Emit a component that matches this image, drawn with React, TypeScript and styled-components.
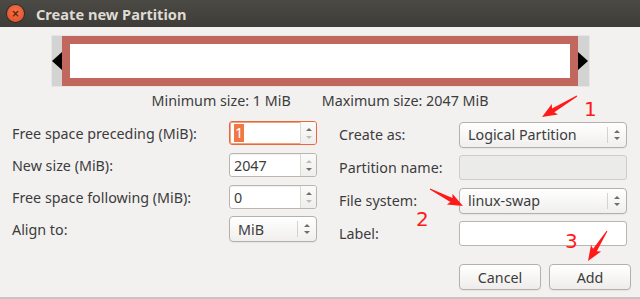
import React from 'react'
import styled, { createGlobalStyle } from 'styled-components'

const GlobalStyle = createGlobalStyle`
  html, body {
    margin: 0;
    padding: 0;
    width: 640px;
    height: 299px;
    overflow: hidden;
    background: #f2f1f0;
  }
  * {
    box-sizing: border-box;
  }
`

const Window = styled.div`
  position: relative;
  width: 640px;
  height: 299px;
  background: #f2f1f0;
  border-bottom: 2px solid #c8c5c0;
  font-family: 'Noto Sans', 'Open Sans', sans-serif;
  font-size: 14.3px;
  color: #3c3c3c;
  display: flex;
  flex-direction: column;
`

const TitleBar = styled.div`
  height: 27px;
  display: flex;
  align-items: center;
  padding-left: 7px;
  background: linear-gradient(#4b4a45, #3d3c38);
`

const CloseButton = styled.div`
  width: 17px;
  height: 17px;
  border-radius: 50%;
  background: radial-gradient(circle at 50% 40%, #f4744a, #df4b22);
  box-shadow: 0 0 0 1px #2e2d2a;
  display: flex;
  align-items: center;
  justify-content: center;
  color: #5a1d0c;
  font-family: 'DejaVu Sans', sans-serif;
  font-size: 10px;
  font-weight: bold;
  line-height: 1;
`

const Title = styled.div`
  margin-left: 12px;
  color: #dfdbd2;
  font-weight: bold;
  font-size: 14.6px;
`

const Body = styled.div`
  display: flex;
  flex-direction: column;
  padding-top: 8px;
`

const PartitionBar = styled.div`
  align-self: center;
  margin-left: 1px;
  width: 539px;
  height: 52px;
  border: 1px solid #e6e6e6;
  background: #d3d3d3;
  display: flex;
  align-items: stretch;
`

const Handle = styled.div<{ $side: 'left' | 'right' }>`
  width: ${(p) => (p.$side === 'left' ? '10px' : '11px')};
  display: flex;
  align-items: center;
`

const Triangle = styled.div<{ $side: 'left' | 'right' }>`
  width: 0;
  height: 0;
  border-top: 9px solid transparent;
  border-bottom: 9px solid transparent;
  ${(p) =>
    p.$side === 'left'
      ? 'border-right: 10px solid #000;'
      : 'border-left: 10px solid #000;'}
`

const PartitionBox = styled.div`
  flex: 1;
  border: 8px solid #c1675d;
  background: #fff;
`

const SizeInfo = styled.div`
  display: flex;
  justify-content: center;
  gap: 31px;
  margin-top: 6px;
  height: 16px;
  line-height: 16px;
`

const Form = styled.div`
  display: flex;
  margin-top: 8px;
  padding-left: 12px;
`

const LeftGrid = styled.div`
  display: grid;
  grid-template-columns: 217px 88px;
  grid-auto-rows: 32px;
  align-items: center;
`

const RightGrid = styled.div`
  display: grid;
  grid-template-columns: 120px 168px;
  grid-auto-rows: 33px;
  align-items: center;
  margin-left: 22px;
  padding-top: 1px;
`

const Label = styled.div`
  white-space: nowrap;
`

const SpinBox = styled.div<{ $focused?: boolean }>`
  height: 24px;
  display: flex;
  border: 1px solid ${(p) => (p.$focused ? '#e9683a' : '#b9b5af')};
  border-radius: 3px;
  background: #fff;
  box-shadow: ${(p) => (p.$focused ? 'inset 0 0 0 1px #f2a17f' : 'inset 0 1px 1px rgba(0,0,0,0.06)')};
  overflow: hidden;
`

const SpinValue = styled.div`
  flex: 1;
  display: flex;
  align-items: center;
  padding-left: 4px;
`

const Selected = styled.span`
  background: #f07746;
  color: #fff;
  padding: 0 1px;
  line-height: 18px;
`

const SpinButtons = styled.div`
  width: 16px;
  border-left: 1px solid #dcd9d5;
  background: linear-gradient(#fbfbfa, #efeeec);
  display: flex;
  flex-direction: column;
  align-items: center;
  justify-content: center;
  gap: 5px;
`

const Arrow = styled.div<{ $dir: 'up' | 'down'; $dim?: boolean }>`
  width: 0;
  height: 0;
  border-left: 3px solid transparent;
  border-right: 3px solid transparent;
  ${(p) =>
    p.$dir === 'up'
      ? `border-bottom: 3px solid ${p.$dim ? '#bdbdbd' : '#6e6e6e'};`
      : `border-top: 3px solid ${p.$dim ? '#bdbdbd' : '#6e6e6e'};`}
`

const Combo = styled.div`
  height: 26px;
  display: flex;
  align-items: center;
  border: 1px solid #b4b0aa;
  border-radius: 4px;
  background: linear-gradient(#ffffff, #f0efed);
  box-shadow: 0 1px 1px rgba(0, 0, 0, 0.05);
`

const ComboText = styled.div`
  flex: 1;
  padding-left: 8px;
`

const ComboArrows = styled.div`
  width: 19px;
  height: 16px;
  border-left: 1px solid #d6d3ce;
  display: flex;
  flex-direction: column;
  align-items: center;
  justify-content: center;
  gap: 4px;
`

const Entry = styled.div<{ $disabled?: boolean }>`
  height: 25px;
  border: 1px solid ${(p) => (p.$disabled ? '#cfccc7' : '#b9b5af')};
  border-radius: 3px;
  background: ${(p) => (p.$disabled ? '#ebebea' : '#fff')};
`

const ButtonRow = styled.div`
  display: flex;
  justify-content: flex-end;
  gap: 8px;
  margin-top: 14px;
  padding-right: 9px;
`

const Button = styled.div`
  width: 82px;
  height: 26px;
  display: flex;
  align-items: center;
  justify-content: center;
  border: 1px solid #b4b0aa;
  border-radius: 4px;
  background: linear-gradient(#ffffff, #eeedeb);
  box-shadow: 0 1px 1px rgba(0, 0, 0, 0.06);
`

const Overlay = styled.svg`
  position: absolute;
  left: 0;
  top: 0;
  pointer-events: none;
`

const Mark = styled.span<{ $x: number; $y: number }>`
  position: absolute;
  left: ${(p) => p.$x}px;
  top: ${(p) => p.$y}px;
  font-family: 'DejaVu Sans', sans-serif;
  font-size: 20px;
  line-height: 1;
  color: #ff1a1a;
`

// tapered arrow polygon from tail (x1,y1) to tip (x2,y2)
const arrowPoints = (x1: number, y1: number, x2: number, y2: number) => {
  const dx = x2 - x1
  const dy = y2 - y1
  const len = Math.hypot(dx, dy)
  const ux = dx / len
  const uy = dy / len
  const nx = -uy
  const ny = ux
  const at = (d: number, w: number) =>
    `${(x1 + ux * d + nx * w).toFixed(1)},${(y1 + uy * d + ny * w).toFixed(1)}`
  const headLen = 13
  return [
    at(0, 0.5),
    at(len - headLen, 2.2),
    at(len - headLen - 2, 6),
    at(len, 0),
    at(len - headLen - 2, -6),
    at(len - headLen, -2.2),
    at(0, -0.5),
  ].join(' ')
}

const Spin = ({
  value,
  focused,
  upDim,
  downDim,
}: {
  value: string
  focused?: boolean
  upDim?: boolean
  downDim?: boolean
}) => (
  <SpinBox $focused={focused}>
    <SpinValue>{focused ? <Selected>{value}</Selected> : value}</SpinValue>
    <SpinButtons>
      <Arrow $dir="up" $dim={upDim} />
      <Arrow $dir="down" $dim={downDim} />
    </SpinButtons>
  </SpinBox>
)

const ComboBox = ({ text }: { text: string }) => (
  <Combo>
    <ComboText>{text}</ComboText>
    <ComboArrows>
      <Arrow $dir="up" />
      <Arrow $dir="down" />
    </ComboArrows>
  </Combo>
)

export default function App() {
  return (
    <Window>
      <GlobalStyle />
      <TitleBar>
        <CloseButton>×</CloseButton>
        <Title>Create new Partition</Title>
      </TitleBar>
      <Body>
        <PartitionBar>
          <Handle $side="left">
            <Triangle $side="left" />
          </Handle>
          <PartitionBox />
          <Handle $side="right">
            <Triangle $side="right" />
          </Handle>
        </PartitionBar>
        <SizeInfo>
          <span>Minimum size: 1 MiB</span>
          <span>Maximum size: 2047 MiB</span>
        </SizeInfo>
        <Form>
          <LeftGrid>
            <Label>Free space preceding (MiB):</Label>
            <Spin value="1" focused downDim />
            <Label>New size (MiB):</Label>
            <Spin value="2047" upDim />
            <Label>Free space following (MiB):</Label>
            <Spin value="0" downDim />
            <Label>Align to:</Label>
            <ComboBox text="MiB" />
          </LeftGrid>
          <RightGrid>
            <Label>Create as:</Label>
            <ComboBox text="Logical Partition" />
            <Label>Partition name:</Label>
            <Entry $disabled />
            <Label>File system:</Label>
            <ComboBox text="linux-swap" />
            <Label>Label:</Label>
            <Entry />
          </RightGrid>
        </Form>
        <ButtonRow>
          <Button>Cancel</Button>
          <Button>Add</Button>
        </ButtonRow>
      </Body>
      <Overlay width="640" height="299">
        <polygon points={arrowPoints(577, 96, 542, 117)} fill="#ff1a1a" />
        <polygon points={arrowPoints(430, 189, 463, 206)} fill="#ff1a1a" />
        <polygon points={arrowPoints(607, 231, 588, 261)} fill="#ff1a1a" />
      </Overlay>
      <Mark $x={584} $y={99}>1</Mark>
      <Mark $x={416} $y={209}>2</Mark>
      <Mark $x={565} $y={231}>3</Mark>
    </Window>
  )
}
